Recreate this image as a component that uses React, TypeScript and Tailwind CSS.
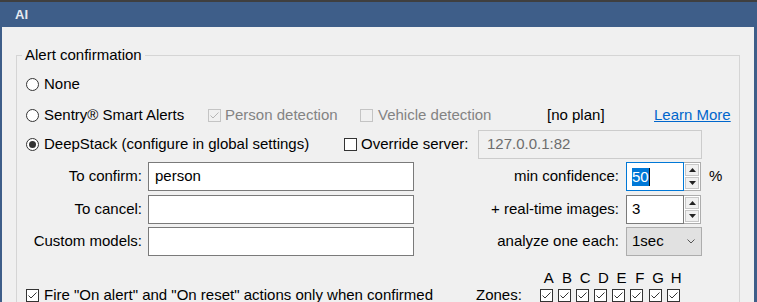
const font = { fontFamily: '"Liberation Sans", Arial, sans-serif' };

function Radio({ checked = false }: { checked?: boolean }) {
  return (
    <svg width="13" height="13" viewBox="0 0 13 13" className="shrink-0">
      <circle cx="6.5" cy="6.5" r="6" fill="#fff" stroke="#333" strokeWidth="1" />
      {checked && <circle cx="6.5" cy="6.5" r="3.5" fill="#333" />}
    </svg>
  );
}

function Check({ checked = false, disabled = false }: { checked?: boolean; disabled?: boolean }) {
  const stroke = disabled ? "#c4c4c4" : "#333";
  return (
    <svg width="13" height="13" viewBox="0 0 13 13" className="shrink-0">
      <rect x="0.5" y="0.5" width="12" height="12" fill={disabled ? "#f0f0f0" : "#fff"} stroke={stroke} />
      {checked && (
        <polyline points="2.5,6.5 5,9 10.5,3.5" fill="none" stroke={disabled ? "#b5b5b5" : "#333"} strokeWidth="1" />
      )}
    </svg>
  );
}

function Spin({ value, focused = false }: { value: string; focused?: boolean }) {
  return (
    <div className="flex h-[29px]">
      <div
        className={`w-[58px] h-full bg-white border flex items-center pl-[5px] ${
          focused ? "border-[#0078d7]" : "border-[#7a7a7a]"
        }`}
      >
        {focused ? (
          <span className="flex items-center">
            <span className="bg-[#0078d7] text-white leading-[18px]">{value}</span>
            <span className="w-px h-[18px] bg-[#111]" />
          </span>
        ) : (
          <span>{value}</span>
        )}
      </div>
      <div className="w-[17px] h-full border border-l-0 border-[#adadad] flex flex-col p-px gap-px bg-white">
        <div className="flex-1 bg-[#f0f0f0] border border-[#c7c7c7] flex items-center justify-center">
          <svg width="7" height="4" viewBox="0 0 7 4"><polygon points="0,4 7,4 3.5,0" fill="#222" /></svg>
        </div>
        <div className="flex-1 bg-[#f0f0f0] border border-[#c7c7c7] flex items-center justify-center">
          <svg width="7" height="4" viewBox="0 0 7 4"><polygon points="0,0 7,0 3.5,4" fill="#222" /></svg>
        </div>
      </div>
    </div>
  );
}

function Field({ value = "" }: { value?: string }) {
  return (
    <div className="w-[266px] h-[29px] bg-white border border-[#7a7a7a] flex items-center pl-[6px]">{value}</div>
  );
}

const zones = ["A", "B", "C", "D", "E", "F", "G", "H"];

export default function App() {
  return (
    <div className="w-[757px] h-[302px] overflow-hidden flex flex-col bg-[#3e5e89] text-[15px] text-black" style={font}>
      <div className="h-[2px] bg-[#3f3f3f] shrink-0" />
      <div className="h-[25px] shrink-0 flex items-center pl-[15px] text-[13px] font-bold text-[#e4eaf2]">AI</div>

      <div className="flex-1 ml-[2px] mr-[3px] bg-[#f0f0f0] pl-[14px] pt-[18px]">
        <fieldset className="w-[724px] border border-[#d5d5d5] pb-4">
          <legend className="ml-[5px] px-[3px] leading-[20px]">Alert confirmation</legend>

          {/* None */}
          <div className="mt-[3px] h-[32px] pl-[9px] flex items-center gap-[5px]">
            <Radio />
            <span>None</span>
          </div>

          {/* Sentry */}
          <div className="h-[30px] pl-[9px] flex items-center">
            <div className="w-[182px] flex items-center gap-[5px]">
              <Radio />
              <span>Sentry® Smart Alerts</span>
            </div>
            <div className="w-[152px] flex items-center gap-[4px] text-[#838383]">
              <Check checked disabled />
              <span>Person detection</span>
            </div>
            <div className="w-[187px] flex items-center gap-[5px] text-[#838383]">
              <Check disabled />
              <span>Vehicle detection</span>
            </div>
            <div className="w-[107px]">[no plan]</div>
            <a className="text-[#0066cc] underline">Learn More</a>
          </div>

          {/* DeepStack */}
          <div className="h-[29px] pl-[9px] flex items-center">
            <div className="w-[318px] flex items-center gap-[5px]">
              <Radio checked />
              <span>DeepStack (configure in global settings)</span>
            </div>
            <div className="w-[134px] flex items-center gap-[4px]">
              <Check />
              <span>Override server:</span>
            </div>
            <div className="w-[224px] h-[29px] border border-[#cccccc] bg-[#f0f0f0] flex items-center pl-[8px] text-[#6d6d6d]">
              127.0.0.1:82
            </div>
          </div>

          {/* object rows */}
          <div className="mt-[3px] h-[29px] pl-[9px] flex items-center">
            <span className="w-[116px] text-right">To confirm:</span>
            <div className="ml-[6px]"><Field value="person" /></div>
            <span className="w-[205px] text-right">min confidence:</span>
            <div className="ml-[7px]"><Spin value="50" focused /></div>
            <span className="ml-[8px]">%</span>
          </div>
          <div className="mt-[4px] h-[29px] pl-[9px] flex items-center">
            <span className="w-[116px] text-right">To cancel:</span>
            <div className="ml-[6px]"><Field /></div>
            <span className="w-[205px] text-right">+ real-time images:</span>
            <div className="ml-[7px]"><Spin value="3" /></div>
          </div>
          <div className="mt-[3px] h-[29px] pl-[9px] flex items-center">
            <span className="w-[116px] text-right">Custom models:</span>
            <div className="ml-[6px]"><Field /></div>
            <span className="w-[205px] text-right">analyze one each:</span>
            <div className="ml-[7px] w-[76px] h-[29px] bg-[#e1e1e1] border border-[#adadad] flex items-center justify-between pl-[5px] pr-[6px]">
              <span>1sec</span>
              <svg width="8" height="5" viewBox="0 0 8 5"><polyline points="0.5,0.5 4,4 7.5,0.5" fill="none" stroke="#555" /></svg>
            </div>
          </div>

          {/* confirm + zones */}
          <div className="mt-[13px] grid grid-cols-[459px_63.5px_auto]">
            <div />
            <div />
            <div className="flex leading-[18px]">
              {zones.map((z) => (
                <span key={z} className="w-[18.2px] pl-[0.5px] text-center">{z}</span>
              ))}
            </div>
            <div className="h-[16px] pl-[9px] flex items-center gap-[5px] whitespace-nowrap">
              <Check checked />
              <span>Fire "On alert" and "On reset" actions only when confirmed</span>
            </div>
            <div className="h-[16px] flex items-center">Zones:</div>
            <div className="h-[16px] flex items-center">
              {zones.map((z) => (
                <span key={z} className="w-[18.2px] flex">
                  <Check checked />
                </span>
              ))}
            </div>
          </div>
        </fieldset>
      </div>
    </div>
  );
}
